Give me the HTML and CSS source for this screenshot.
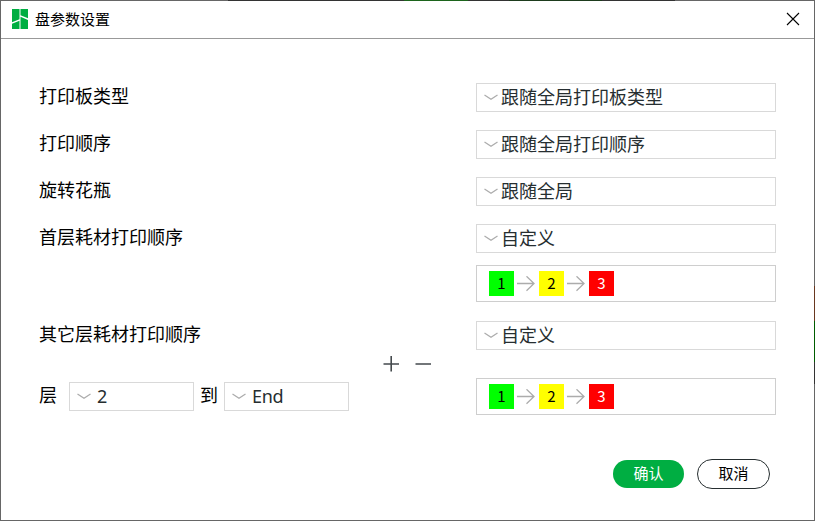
FILE: index.html
```html
<!DOCTYPE html>
<html lang="zh-CN">
<head>
<meta charset="utf-8">
<title>盘参数设置</title>
<link rel="stylesheet" href="styles.css">
</head>
<body>
<svg width="0" height="0" class="defs">
  <symbol id="chev" viewBox="0 0 14 7"><path d="M.5 1 L7 5.2 L13.5 1" fill="none" stroke="#acacac" stroke-width="1.25"/></symbol>
  <symbol id="arrow" viewBox="0 0 18 16"><path d="M0 7.5H17M9.5 .3L17 7.5L9.5 14.7" fill="none" stroke="#acacac" stroke-width="1.3"/></symbol>
</svg>
<div class="dialog">
  <header class="titlebar">
    <svg class="logo" width="16" height="20" viewBox="0 0 16 20"><path fill="#00ae42" d="M0 0H7.5V10.2L0 13.2ZM8.5 0H16V9.3L8.5 6.2ZM0 14.7L7.5 11.7V20H0ZM8.5 7.8L16 10.9V20H8.5Z"/></svg>
    <h1>盘参数设置</h1>
    <svg class="close" width="14" height="14" viewBox="0 0 14 14"><path d="M1 1L13 13M13 1L1 13" fill="none" stroke="#000" stroke-width="1.1"/></svg>
  </header>
  <main>
    <div class="row"><label>打印板类型</label><div class="select"><svg><use href="#chev"/></svg><span>跟随全局打印板类型</span></div></div>
    <div class="row"><label>打印顺序</label><div class="select"><svg><use href="#chev"/></svg><span>跟随全局打印顺序</span></div></div>
    <div class="row"><label>旋转花瓶</label><div class="select"><svg><use href="#chev"/></svg><span>跟随全局</span></div></div>
    <div class="row first"><label>首层耗材打印顺序</label><div class="select"><svg><use href="#chev"/></svg><span>自定义</span></div></div>
    <div class="row order"><div class="sequence"><b class="green">1</b><svg><use href="#arrow"/></svg><b class="yellow">2</b><svg><use href="#arrow"/></svg><b class="red">3</b></div></div>
    <div class="row other"><label>其它层耗材打印顺序</label><div class="select"><svg><use href="#chev"/></svg><span>自定义</span></div></div>
    <div class="tools"><svg width="48" height="16" viewBox="0 0 48 16"><path d="M.5 8H16M8.2 0V15.6M32.5 8H48" fill="none" stroke="#444a4d" stroke-width="1.6"/></svg></div>
    <div class="row layers">
      <div class="range"><label>层</label><div class="select small"><svg><use href="#chev"/></svg><span>2</span></div><label class="to">到</label><div class="select small"><svg><use href="#chev"/></svg><span>End</span></div></div>
      <div class="sequence"><b class="green">1</b><svg><use href="#arrow"/></svg><b class="yellow">2</b><svg><use href="#arrow"/></svg><b class="red">3</b></div>
    </div>
  </main>
  <footer><button class="ok">确认</button><button class="cancel">取消</button></footer>
</div>
</body>
</html>
```
FILE: styles.css
```css
* { box-sizing: border-box; }
body { margin: 0; font-family: "Noto Sans", "Noto Sans CJK SC", sans-serif; color: #000; }
.defs { position: absolute; }
.dialog { width: 815px; height: 521px; padding: 1px; overflow: hidden;
  background: linear-gradient(#fff, #fff) content-box,
    linear-gradient(#666 286px, #68371f 286px 321px, #005c00 321px 362px, #333 362px 384px, #666 384px) right / 1px 100% no-repeat,
    linear-gradient(90deg, #666 228px, #333 228px 404px, #1c641c 404px 468px, #333 468px 509px, #1d3b1d 509px 602px, #333 602px 675px, #666 675px) top / 100% 1px no-repeat, #666; }
.titlebar { display: flex; align-items: center; height: 38px; padding: 0 14px 1px 11px; border-bottom: 1px solid #999; }
.titlebar h1 { flex: 1; margin: 0 0 0 7px; font: 15px/20px "Noto Sans CJK SC", sans-serif; }
.logo { margin-bottom: 1px; }
svg { display: block; flex: none; }
main { padding: 44px 38px 0; }
.row { display: flex; justify-content: space-between; height: 29px; margin-bottom: 18px; font-size: 18px; line-height: 27px; }
.row label { font-family: "Noto Sans CJK SC", sans-serif; line-height: 25px; }
.select { display: flex; align-items: center; width: 300px; height: 29px; padding-left: 7px; border: 1px solid #d9d9d9; color: #262e30; }
.select svg { width: 14px; height: 7px; margin-right: 3px; }
.small { width: 125px; letter-spacing: -.3px; }
.small svg { margin-right: 6px; }
.first { margin-bottom: 12px; }
.order { height: 37px; justify-content: flex-end; margin-bottom: 19px; }
.other { margin-bottom: 6px; }
.sequence { display: flex; align-items: center; width: 300px; height: 37px; padding-left: 12px; border: 1px solid #cecece; }
.sequence b { width: 25px; height: 25px; font: 15px/23px "Noto Sans CJK SC", sans-serif; text-align: center; }
.sequence svg { width: 18px; height: 16px; margin: 0 4px 0 3px; }
.green { background: #0f0; }
.yellow { background: #ff0; }
.red { background: #f00; color: #fff; }
.tools { height: 22px; padding-left: 344px; }
.layers { height: 37px; margin: 0; }
.range { display: flex; padding-top: 4px; }
.range label { width: 30px; }
.range .to { width: 30px; padding-left: 6px; }
footer { display: flex; justify-content: flex-end; align-items: center; gap: 13px; height: 30px; margin-top: 44px; padding-right: 44px; }
button { width: 71px; height: 28px; padding: 0 0 2px; border: 0; border-radius: 15px; font: 15px/26px "Noto Sans CJK SC", sans-serif; }
.ok { background: #00ae42; color: #fff; }
.cancel { width: 73px; height: 30px; border: 1px solid #262e30; background: #fff; color: #000; }
```
